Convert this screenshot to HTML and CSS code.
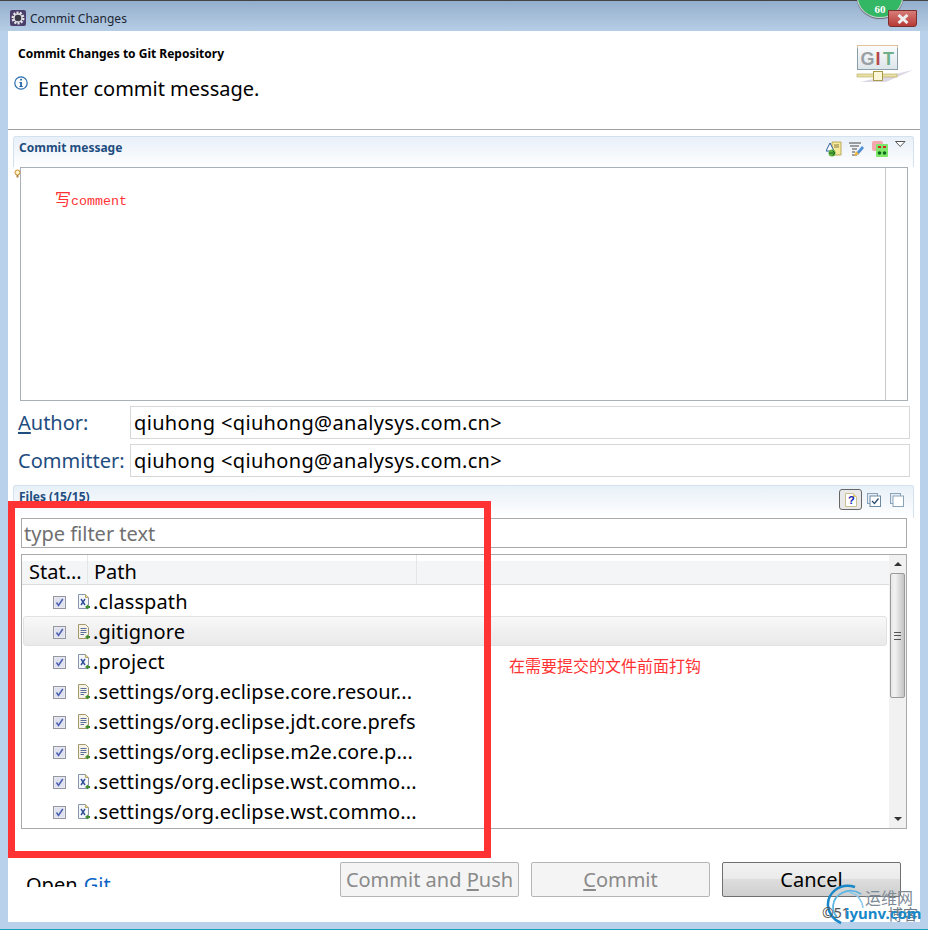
FILE: index.html
```html
<!DOCTYPE html>
<html lang="en">
<head>
<meta charset="utf-8">
<title>Commit Changes</title>
<link rel="stylesheet" href="styles.css">
</head>
<body>
<svg class="defs" width="0" height="0">
  <defs>
    <symbol id="chk" viewBox="0 0 13 13">
      <rect x="0.500" y="0.500" width="12" height="12" fill="#eef0f6" stroke="#96979e"/>
      <rect x="1.500" y="1.500" width="10" height="10" fill="#dfe2ee"/>
      <path d="M3.500 6.500 L5.500 9.500 L9.800 3" fill="none" stroke="#4a5fb0" stroke-width="1.500"/>
    </symbol>
    <symbol id="fx" viewBox="0 0 12 16">
      <path d="M0.500 0.500 H7.500 L10.500 3.500 V14.500 H0.500 Z" fill="#f4f6fa" stroke="#8795ad"/>
      <path d="M7.500 0.500 V3.500 H10.500" fill="#e8d89a" stroke="#b9a660"/>
      <path d="M3 5 L7 11 M7 5 L3 11" stroke="#2f4f96" stroke-width="1.400"/>
      <path d="M7 13 L10 10.500 V12 H12 V14 H10 V15.500 Z" fill="#3e8e2f"/>
    </symbol>
    <symbol id="ft" viewBox="0 0 12 16">
      <path d="M0.500 0.500 H7.500 L10.500 3.500 V14.500 H0.500 Z" fill="#f6f3e6" stroke="#a3986a"/>
      <path d="M2.500 4.500 H8.500 M2.500 6.500 H8.500 M2.500 8.500 H8.500 M2.500 10.500 H6" stroke="#5a6f9c"/>
      <path d="M7 13 L10 10.500 V12 H12 V14 H10 V15.500 Z" fill="#3e8e2f"/>
    </symbol>
  </defs>
</svg>
<div class="window">
  <div class="titlebar">
    <svg class="app-icon" width="16" height="16" viewBox="0 0 16 16">
      <rect width="16" height="16" rx="2" fill="#4b3f6b"/>
      <circle cx="8" cy="8" r="5.200" fill="none" stroke="#e6e6e6" stroke-width="2.600" stroke-dasharray="2 1.200"/>
      <circle cx="8" cy="8" r="4" fill="none" stroke="#dcdcdc" stroke-width="1.400"/>
      <circle cx="8" cy="8" r="3" fill="#3a3a44"/>
    </svg>
    <span class="title-text">Commit Changes</span>
  </div>
  <main class="client">
    <header class="banner">
      <div class="banner-text">
        <div class="banner-title">Commit Changes to Git Repository</div>
        <div class="banner-msg">
          <svg class="info" width="14" height="14" viewBox="0 0 14 14">
            <circle cx="7" cy="7" r="6.200" fill="#fff" stroke="#2a6db0" stroke-width="1.200"/>
            <rect x="6.200" y="2.800" width="1.700" height="1.700" fill="#1f5f9f"/>
            <path d="M5.200 6 H7.900 V10.200 H9 V11 H5.200 V10.200 H6.200 V6.800 H5.200 Z" fill="#1f5f9f"/>
          </svg>
          <span>Enter commit message.</span>
        </div>
      </div>
      <svg class="git-logo" width="60" height="40" viewBox="0 0 60 40">
        <defs>
          <linearGradient id="gitbg" x1="0" y1="0" x2="0" y2="1"><stop offset="0" stop-color="#fbfcfd"/><stop offset="1" stop-color="#dde5ea"/></linearGradient>
        </defs>
        <path d="M4 37 L57 25 L30 37 Z" fill="#dcd8e4"/>
        <rect x="1.500" y="0.500" width="40" height="24" fill="url(#gitbg)" stroke="#8a9ea8"/>
        <path d="M1.500 3 V0.500 H41.500 V3" fill="none" stroke="#e2c49a"/>
        <text x="4.500" y="20" class="git-g">G</text>
        <text x="19.500" y="20" class="git-i">I</text>
        <text x="27" y="20" class="git-t">T</text>
        <rect x="1" y="29" width="40" height="3" fill="#e9e2a6" stroke="#b5a85a" stroke-width="0.600"/>
        <rect x="17.500" y="26.500" width="9" height="9" fill="#fbf6d8" stroke="#a89a48"/>
      </svg>
    </header>

    <section class="panel panel-commit">
      <div class="panel-head">
        <span class="panel-title">Commit message</span>
        <div class="tools">
          <svg width="16" height="16" viewBox="0 0 16 16">
            <path d="M6 1 H15 V14 H6 Z" fill="#f7e99a" stroke="#b9a95a"/>
            <path d="M8 4 H13 M8 6 H13" stroke="#8a7d45"/>
            <path d="M4 2 L8 10 H0 Z" fill="#fff" stroke="#2b5c9e"/>
            <circle cx="6" cy="12" r="3.500" fill="#5fb03c"/>
            <path d="M3 12 H9 M6.500 9.500 L9 12 L6.500 14.500" fill="none" stroke="#1f6b20"/>
          </svg>
          <svg width="16" height="16" viewBox="0 0 16 16">
            <path d="M0 2 H12 M1 5 H10 M3 8 H8 M3 11 H6 M3 14 H8" stroke="#444"/>
            <path d="M7 12 L13 5 L15 7 L9 14 Z" fill="#4f8fd8"/>
            <path d="M5 15 L7 10 L10 13 Z" fill="#f1b93c"/>
          </svg>
          <svg width="16" height="16" viewBox="0 0 16 16">
            <rect x="0" y="0" width="11" height="10" rx="2" fill="#f5a9ae"/>
            <rect x="4" y="3" width="12" height="13" rx="1" fill="#7fe86a"/>
            <path d="M6 6 H9 M11 6 H14" stroke="#d02b2b" stroke-width="2"/>
            <circle cx="7.500" cy="12" r="1.800" fill="#0d6a1f"/>
            <circle cx="12.500" cy="12" r="1.800" fill="#0d6a1f"/>
          </svg>
          <svg class="menu-tri" width="11" height="7" viewBox="0 0 11 7"><path d="M0.500 0.500 H10 L5.250 5.500 Z" fill="#fff" stroke="#555"/></svg>
        </div>
      </div>
    </section>
    <div class="editor">
      <svg class="bulb" width="7" height="9" viewBox="0 0 7 9"><circle cx="3.500" cy="3.500" r="2.500" fill="#fff3c4" stroke="#c98a2e"/><rect x="2.500" y="6" width="2" height="2.500" fill="#b08040"/></svg>
      <div class="ruler"></div>
      <div class="note note-comment"><span class="cjk">写</span>comment</div>
    </div>

    <div class="field-row">
      <label class="field-label"><span class="ul">A</span>uthor:</label>
      <div class="field">qiuhong &lt;qiuhong@analysys.com.cn&gt;</div>
    </div>
    <div class="field-row">
      <label class="field-label">Committer:</label>
      <div class="field">qiuhong &lt;qiuhong@analysys.com.cn&gt;</div>
    </div>

    <section class="panel panel-files">
      <div class="panel-head">
        <span class="panel-title">Files (15/15)</span>
        <div class="tools tools-files">
          <span class="tool-on">
            <svg width="14" height="16" viewBox="0 0 14 16"><path d="M1.500 1.500 H9 L12.500 5 V14.500 H1.500 Z" fill="#fff" stroke="#c8c090"/><path d="M9 1.500 V5 H12.500" fill="#e8c66a"/><text x="4" y="12" class="q">?</text></svg>
          </span>
          <svg width="14" height="14" viewBox="0 0 14 14"><rect x="0.500" y="0.500" width="10" height="10" fill="#e6edf4" stroke="#8ba3b8"/><rect x="3" y="3" width="10.500" height="10.500" fill="#fff" stroke="#6d8aa3"/><path d="M5 8 L7.500 10.500 L11.500 5.500" fill="none" stroke="#2f4f6e" stroke-width="1.300"/></svg>
          <svg width="14" height="14" viewBox="0 0 14 14"><rect x="0.500" y="0.500" width="10" height="10" fill="#e6edf4" stroke="#8ba3b8"/><rect x="3" y="3" width="10.500" height="10.500" fill="#fff" stroke="#8ba3b8"/></svg>
        </div>
      </div>
    </section>

    <div class="filter">type filter text</div>

    <div class="table">
      <div class="table-main">
        <div class="thead">
          <div class="th th-status">Stat...</div>
          <div class="th th-path">Path</div>
        </div>
        <ul class="rows">
          <li class="row"><svg class="c" width="13" height="13"><use href="#chk"/></svg><svg class="f" width="12" height="16"><use href="#fx"/></svg><span>.classpath</span></li>
          <li class="row row-hover"><svg class="c" width="13" height="13"><use href="#chk"/></svg><svg class="f" width="12" height="16"><use href="#ft"/></svg><span>.gitignore</span></li>
          <li class="row"><svg class="c" width="13" height="13"><use href="#chk"/></svg><svg class="f" width="12" height="16"><use href="#fx"/></svg><span>.project</span></li>
          <li class="row"><svg class="c" width="13" height="13"><use href="#chk"/></svg><svg class="f" width="12" height="16"><use href="#ft"/></svg><span>.settings/org.eclipse.core.resour...</span></li>
          <li class="row"><svg class="c" width="13" height="13"><use href="#chk"/></svg><svg class="f" width="12" height="16"><use href="#ft"/></svg><span>.settings/org.eclipse.jdt.core.prefs</span></li>
          <li class="row"><svg class="c" width="13" height="13"><use href="#chk"/></svg><svg class="f" width="12" height="16"><use href="#ft"/></svg><span>.settings/org.eclipse.m2e.core.p...</span></li>
          <li class="row"><svg class="c" width="13" height="13"><use href="#chk"/></svg><svg class="f" width="12" height="16"><use href="#fx"/></svg><span>.settings/org.eclipse.wst.commo...</span></li>
          <li class="row"><svg class="c" width="13" height="13"><use href="#chk"/></svg><svg class="f" width="12" height="16"><use href="#fx"/></svg><span>.settings/org.eclipse.wst.commo...</span></li>
        </ul>
      </div>
      <div class="scrollbar">
        <div class="arrow arrow-up"></div>
        <div class="thumb"><div class="grip"></div></div>
        <div class="track"></div>
        <div class="arrow arrow-down"></div>
      </div>
    </div>

    <footer class="footer">
      <div class="open-link">Open <span class="git-link">Git</span></div>
      <div class="buttons">
        <button class="btn btn-off">Commit and <span class="ul">P</span>ush</button>
        <button class="btn btn-off"><span class="ul">C</span>ommit</button>
        <button class="btn btn-on">Cancel</button>
      </div>
    </footer>
  </main>

  <div class="red-box"></div>
  <div class="note note-files">在需要提交的文件前面打钩</div>

  <div class="badge"><span>60</span></div>
  <div class="close"><svg width="14" height="10" viewBox="0 0 14 10"><path d="M2.500 1 L11.500 9 M11.500 1 L2.500 9" stroke="#eee" stroke-width="3"/></svg></div>

  <div class="mark">
    <svg class="mark-swirl" width="44" height="44" viewBox="0 0 44 44">
      <path d="M30 3 C14 -2 2 10 3 22 C4 30 9 36 16 39" fill="none" stroke="#1787c8" stroke-width="2.500"/>
      <path d="M36 10 C24 2 9 10 8 22 C8 27 10 31 12 33" fill="none" stroke="#59b4e2" stroke-width="1.800"/>
      <path d="M38 24 C37 16 32 10 24 8" fill="none" stroke="#8cc9ea" stroke-width="1.500"/>
    </svg>
    <span class="mark-top">运维网</span>
    <span class="mark-grey">博客</span>
    <span class="mark-left">©51</span>
    <span class="mark-bottom">iyunv.com</span>
  </div>
</div>
</body>
</html>
```

FILE: styles.css
```css
* { box-sizing: border-box; }
html, body { margin: 0; padding: 0; }
body { width: 928px; height: 930px; overflow: hidden; background: #b9d1ea; font-family: "Noto Sans", "Open Sans", sans-serif; color: #000; }
.defs { position: absolute; }
.window {
  position: relative;
  width: 928px; height: 930px;
  display: flex; flex-direction: column;
  padding: 0 8px 7px;
  background: #b9d1ea;
  border-bottom: 1px solid #1ba0b8;
}
.window::before {
  content: ""; position: absolute; left: 0; right: 0; top: 0; height: 30px;
  background: linear-gradient(#93aecd 0, #a6bed8 50%, #b6cde6 100%);
  border-top: 1px solid #444;
}
.titlebar { position: relative; height: 30px; flex: none; display: flex; align-items: center; gap: 4px; padding: 6px 0 0 2px; }
.title-text { font-size: 12px; color: #1c2733; }

.client { flex: 1; background: #fff; display: flex; flex-direction: column; min-height: 0; }

.banner { height: 100px; flex: none; display: flex; justify-content: space-between; border-bottom: 1px solid #a0a0a0; padding: 15px 4px 0 10px; }
.banner-title { font-size: 12px; font-weight: 700; line-height: 17px; }
.banner-msg { display: flex; align-items: flex-start; margin-top: 13px; margin-left: -4px; font-size: 20px; line-height: 28px; }
.banner-msg span { margin-left: 10px; }
.info { margin-top: 1px; }
.git-g, .git-i, .git-t { font: 700 18px "Liberation Sans", sans-serif; }
.git-g { fill: #9a9fa3; }
.git-i { fill: #b8474a; }
.git-t { fill: #6fb08a; }
.q { font: 700 11px "Liberation Sans", sans-serif; fill: #1020b0; }

.panel { flex: none; margin: 0 6px 0 5px; }
.panel-commit { margin-top: 6px; }
.panel-head {
  height: 31px; display: flex; justify-content: space-between; padding: 3px 5px 0 5px;
  border: 1px solid #d4e1ee; border-bottom: 0; border-radius: 3px 3px 0 0;
  background: linear-gradient(#e8f0f8, #fff);
}
.panel-title { font-size: 12px; font-weight: 700; color: #1f4d80; line-height: 16px; }
.tools { display: flex; gap: 7px; align-items: flex-start; padding-top: 1px; margin-right: 2px; }

.editor { position: relative; flex: none; height: 234px; margin: 0 12px; border: 1px solid #a8b0b8; }
.ruler { position: absolute; right: 21px; top: 0; bottom: 0; width: 1px; background: #c8c8c8; }
.bulb { position: absolute; left: -7px; top: 1px; }
.note { color: #f33; }
.note-comment { position: absolute; left: 34px; top: 20px; font: 13.330px/20px "Liberation Mono", monospace; display: flex; align-items: baseline; }
.cjk { font: 16px/20px "Noto Sans CJK SC", sans-serif; }

.field-row { flex: none; display: flex; align-items: center; height: 33px; margin: 5px 10px 0; font-size: 20px; }
.field-label { width: 112px; color: #1f4d80; white-space: nowrap; }
.ul { text-decoration: underline; text-underline-offset: 2px; }
.field { flex: 1; height: 33px; border: 1px solid #d8d8d8; padding-left: 3px; line-height: 31px; letter-spacing: 0.35px; }

.panel-files { margin-top: 8px; }
.panel-files .panel-head { height: 33px; }
.tools-files { gap: 9px; align-items: center; height: 21px; margin-right: 4px; padding-top: 0; }
.tool-on { width: 23px; height: 21px; margin-right: -4px; display: flex; align-items: center; justify-content: center; background: #e9e9e9; border: 1px solid #666; border-radius: 3px; }

.filter { flex: none; height: 30px; margin: 0 13px; border: 1px solid #aaa; font-size: 20px; line-height: 30px; padding-left: 2px; color: #707070; }
.table { flex: none; height: 275px; margin: 6px 13px 0; border: 1px solid #aaa; display: flex; overflow: hidden; }
.table-main { flex: 1; min-width: 0; }
.thead { display: flex; height: 30px; border-bottom: 1px solid #dcdcdc; background: linear-gradient(#fff 0, #fff 20%, #f4f5f7 20%, #f4f5f7 100%); font-size: 20px; }
.th { line-height: 34px; padding-left: 6px; border-right: 1px solid #e4e6e9; white-space: nowrap; }
.th-status { width: 66px; padding-left: 7px; }
.th-path { width: 329px; }
.rows { list-style: none; margin: 0; padding: 1px 2px 0 1px; }
.row { height: 30px; display: flex; align-items: center; font-size: 20px; letter-spacing: 0.1px; white-space: nowrap; padding-left: 30px; }
.row .c { flex: none; margin: 2px 12px 0 0; }
.row .f { flex: none; margin: 2px 3px 0 0; }
.row-hover { background: linear-gradient(#f8f8f8, #e9e9e9); border: 1px solid #e2e2e2; border-radius: 3px; padding-left: 29px; }

.scrollbar { width: 17px; flex: none; display: flex; flex-direction: column; background: #f1f1f2; }
.arrow { height: 18px; flex: none; position: relative; }
.arrow::after { content: ""; position: absolute; left: 5px; border-left: 4px solid transparent; border-right: 4px solid transparent; }
.arrow-up::after { top: 7px; border-bottom: 4px solid #333; }
.arrow-down::after { top: 7px; border-top: 4px solid #333; }
.thumb { height: 125px; margin: 0 1px; flex: none; border: 1px solid #9a9a9a; border-radius: 2px; background: linear-gradient(90deg, #e6e6e6, #f2f2f2 30%, #c4c4c4); display: flex; align-items: center; justify-content: center; }
.grip { width: 7px; height: 8px; border-top: 1px solid #555; border-bottom: 1px solid #555; position: relative; }
.grip::after { content: ""; position: absolute; left: 0; right: 0; top: 2px; height: 2px; border-top: 1px solid #555; }
.track { flex: 1; }

.footer { flex: 1; display: flex; align-items: flex-start; justify-content: space-between; min-height: 0; padding: 33px 19px 0 18px; }
.open-link { height: 25px; overflow: hidden; font-size: 20px; line-height: 30px; padding-top: 8px; word-spacing: 1px; }
.git-link { color: #0b62c4; }
.buttons { display: flex; gap: 12px; }
.btn { width: 179px; height: 35px; font: 20px "Noto Sans", "Open Sans", sans-serif; border-radius: 2px; padding: 0; }
.btn-off { border: 1px solid #b5b5b5; background: #f4f4f4; color: #8a8a8a; }
.btn-on { border: 1px solid #707070; background: linear-gradient(#f2f2f2 0, #ebebeb 48%, #dddddd 50%, #cfcfcf 100%); color: #000; }

.red-box { position: absolute; left: 8px; top: 501px; width: 483px; height: 357px; border: 7px solid #f33; }
.note-files { position: absolute; left: 509px; top: 655px; font: 16px/20px "Noto Sans CJK SC", sans-serif; }

.badge { position: absolute; left: 857px; top: -24px; width: 46px; height: 42px; border-radius: 50%; background: #34b765; border: 1px solid #cfd6cf; box-shadow: 0 1px 1px #667; display: flex; align-items: flex-end; justify-content: center; color: #fff; font: 700 11px/16px "Liberation Serif", serif; }
.close { position: absolute; left: 888px; top: 10px; width: 29px; height: 17px; background: linear-gradient(#d77c78, #b83a36); border: 1px solid #7a2f2f; border-radius: 0 0 3px 3px; display: flex; align-items: center; justify-content: center; }

.mark { position: absolute; left: 820px; top: 884px; width: 104px; height: 40px; }
.mark-swirl { position: absolute; left: 5px; top: 0; }
.mark-top { position: absolute; left: 45px; top: 3px; font: 16px/20px "Noto Sans CJK SC", sans-serif; color: #7d8a95; }
.mark-grey { position: absolute; left: 68px; top: 20px; font: 15px/20px "Noto Sans CJK SC", sans-serif; color: #6f7a84; }
.mark-left { position: absolute; left: 2px; top: 20px; font: 14px/18px "Noto Sans", sans-serif; color: #555; }
.mark-bottom { position: absolute; left: 25px; top: 19px; font: 700 15px/20px "Noto Sans", sans-serif; color: #1787c8; }
```
